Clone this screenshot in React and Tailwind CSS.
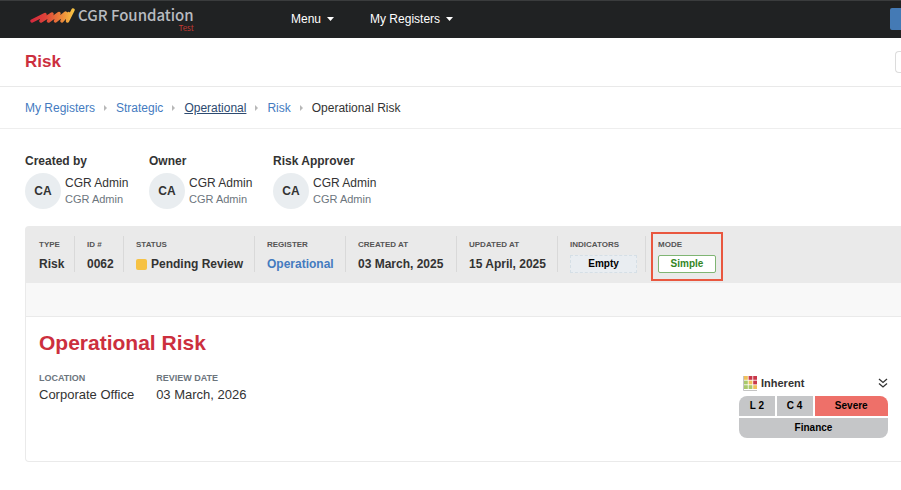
import React from "react";

const people = [
    { role: 'Created by', name: 'CGR Admin', org: 'CGR Admin', initials: 'CA' },
    { role: 'Owner', name: 'CGR Admin', org: 'CGR Admin', initials: 'CA' },
    { role: 'Risk Approver', name: 'CGR Admin', org: 'CGR Admin', initials: 'CA' },
];

const crumbs = ['My Registers', 'Strategic', 'Operational', 'Risk'];

const matrixColors = [
    '#f0c05a', '#c9384a', '#c9384a',
    '#a9c86a', '#f0c05a', '#c9384a',
    '#a9c86a', '#a9c86a', '#f0c05a',
];

const Logo = () => (
    <svg width="46" height="16" viewBox="0 0 46 16" fill="none" strokeLinecap="round" strokeLinejoin="round" strokeWidth="3.400" aria-hidden="true">
        <defs>
            <linearGradient id="logo" x1="0" y1="0" x2="46" y2="0" gradientUnits="userSpaceOnUse">
                <stop offset="0" stopColor="#d2263e" />
                <stop offset="0.35" stopColor="#de4438" />
                <stop offset="0.7" stopColor="#ec8a3a" />
                <stop offset="1" stopColor="#f9d045" />
            </linearGradient>
        </defs>
        <path d="M2 14L15 7.500L11 14L22 7L18.500 14L29 6.500L25.500 14L35.500 6L32 14L38.500 6.500L37.500 14L43 3" stroke="url(#logo)" />
    </svg>
);

const NavMenu = ({ label }) => (
    <button className="flex items-center gap-1.5 text-white">
        {label}
        <svg width="7" height="4" viewBox="0 0 7 4" aria-hidden="true">
            <path d="M0 0h7L3.500 4z" fill="currentColor" />
        </svg>
    </button>
);

const Person = ({ role, name, org, initials }) => (
    <div className="min-w-[106px]">
        <h2 className="leading-4 font-bold text-[#333]">{role}</h2>
        <div className="mt-1 flex items-center gap-1">
            <div className="flex h-9 w-9 items-center justify-center rounded-full bg-[#e9edf0] font-bold text-[#333]">
                {initials}
            </div>
            <div>
                <div className="leading-4 text-[#333]">{name}</div>
                <div className="text-[11px] leading-4 text-[#6c757d]">{org}</div>
            </div>
        </div>
    </div>
);

const Field = ({ label, children, className = '' }) => (
    <div className={`h-9 ${className}`}>
        <div className="text-[8px] leading-[18px] font-bold text-[#555] uppercase">{label}</div>
        <div className="mt-0.5 flex h-4 items-center gap-1 font-bold whitespace-nowrap text-[#333]">{children}</div>
    </div>
);

const App = () => {
    return (
        <div className="min-h-screen overflow-x-hidden bg-white font-['Liberation_Sans',Arial,sans-serif] text-xs">
            {/* Top bar */}
            <header className="flex h-[38px] items-center border-t border-[#3a3c3d] bg-[#202223] pl-[30px]">
                <a href="#" className="flex w-[261px] items-start gap-0.5">
                    <Logo />
                    <span className="flex flex-col items-end font-['Noto_Sans_CJK_JP',sans-serif]">
                        <span className="text-[15px] leading-4 font-medium text-[#b8bbc0]">CGR Foundation</span>
                        <span className="text-[8px] leading-[9px] text-[#c73a32]">Test</span>
                    </span>
                </a>
                <nav className="flex gap-9 pb-0.5">
                    <NavMenu label="Menu" />
                    <NavMenu label="My Registers" />
                </nav>
                <button aria-label="Create" className="mb-0.5 ml-auto h-[22px] w-[11px] rounded-l-xs bg-[#447ab5]"></button>
            </header>

            {/* Page title */}
            <div className="flex h-[49px] items-center border-b border-[#e9e9e9] pl-[25px]">
                <h1 className="text-[17px] font-bold text-[#cc2f3e]">Risk</h1>
                <button aria-label="Actions" className="ml-auto h-[22px] w-[6px] rounded-l-sm border border-r-0 border-[#dcdcdc] bg-white"></button>
            </div>

            {/* Breadcrumbs */}
            <nav aria-label="Breadcrumb" className="flex h-[42px] items-center gap-[9px] border-b border-[#eee] pl-[25px]">
                {crumbs.map((crumb) => (
                    <React.Fragment key={crumb}>
                        <a href="#" className={crumb === 'Operational' ? 'text-[#2d4a70] underline' : 'text-[#447bbf]'}>{crumb}</a>
                        <svg width="3" height="6" viewBox="0 0 3 6" aria-hidden="true">
                            <path d="M0 0l3 3-3 3z" fill="#b8b8b8" />
                        </svg>
                    </React.Fragment>
                ))}
                <span className="text-[#333]">Operational Risk</span>
            </nav>

            <main className="pl-[25px]">
                <div className="flex gap-[18px] pt-6">
                    {people.map((person) => <Person key={person.role} {...person} />)}
                </div>

                <div className="mt-[17px] rounded-l-sm border border-r-0 border-[#eaeaea]">
                    {/* Register summary */}
                    <div className="flex h-14 bg-[#eaeaea] pt-[9px] pl-[13px]">
                        <Field label="Type" className="mr-3 min-w-[36px] border-r border-[#d9d9d9]">Risk</Field>
                        <Field label="ID #" className="mr-3 min-w-[37px] border-r border-[#d9d9d9]">0062</Field>
                        <Field label="Status" className="mr-3 min-w-[119px] border-r border-[#d9d9d9]">
                            <span className="h-[11px] w-[11px] rounded-xs bg-[#f6c244]"></span>
                            Pending Review
                        </Field>
                        <Field label="Register" className="mr-3 min-w-[79px] border-r border-[#d9d9d9]">
                            <a href="#" className="text-[#447bbf]">Operational</a>
                        </Field>
                        <Field label="Created at" className="mr-3 min-w-[99px] border-r border-[#d9d9d9]">03 March, 2025</Field>
                        <Field label="Updated at" className="mr-3 min-w-[89px] border-r border-[#d9d9d9]">15 April, 2025</Field>
                        <Field label="Indicators" className="mr-3 min-w-[76px] border-r border-[#d9d9d9]">
                            <button className="h-[18px] w-[67px] border border-dashed border-[#d5dfe6] bg-[#e9edf1] text-[10px] font-bold text-black">Empty</button>
                        </Field>
                        <div className="-mt-1 -ml-[7px] h-[49px] border-2 border-[#e9573f] px-[5px] pt-0.5">
                            <Field label="Mode">
                                <button className="h-[18px] w-[58px] rounded-xs border border-[#7fb573] bg-white text-[10px] font-bold text-[#33861f]">Simple</button>
                            </Field>
                        </div>
                    </div>
                    <div className="h-[34px] border-b border-[#eaeaea] bg-[#f8f8f8]"></div>

                    {/* Risk details */}
                    <div className="flex h-36 justify-between px-[13px]">
                        <div>
                            <h2 className="pt-3 text-[21px] leading-7 font-bold text-[#cc2f3e]">Operational Risk</h2>
                            <dl className="mt-[13px] flex gap-[22px]">
                                <div>
                                    <dt className="text-[9px] leading-4 font-bold text-[#6c757d]">LOCATION</dt>
                                    <dd className="text-[13px] leading-[18px] text-[#333]">Corporate Office</dd>
                                </div>
                                <div>
                                    <dt className="text-[9px] leading-4 font-bold text-[#6c757d]">REVIEW DATE</dt>
                                    <dd className="text-[13px] leading-[18px] text-[#333]">03 March, 2026</dd>
                                </div>
                            </dl>
                        </div>
                        <section className="mt-[58px] w-[149px]">
                            <div className="flex h-4 items-center gap-1 pl-1">
                                <svg width="14" height="15" viewBox="0 0 14 15" aria-hidden="true">
                                    <path d="M0.500 0V14.500H14" stroke="#c4c4c4" fill="none" />
                                    {matrixColors.map((color, i) => (
                                        <rect key={i} x={1 + (i % 3) * 4.600} y={Math.floor(i / 3) * 4.600} width="3.800" height="3.800" fill={color} />
                                    ))}
                                </svg>
                                <h3 className="text-[11px] font-bold text-[#333]">Inherent</h3>
                                <button aria-label="Expand" className="ml-auto">
                                    <svg width="10" height="12" viewBox="0 0 10 12" fill="none" stroke="#333" strokeWidth="1.300" aria-hidden="true">
                                        <path d="M1 2l4 3.500L9 2M1 6.500l4 3.500 4-3.500" />
                                    </svg>
                                </button>
                            </div>
                            <div className="mt-[5px] grid grid-cols-4 gap-0.5 overflow-hidden rounded-lg text-center text-[10px] leading-5 font-bold text-black">
                                <span className="bg-[#c5c6c8]">L 2</span>
                                <span className="bg-[#c5c6c8]">C 4</span>
                                <span className="col-span-2 bg-[#ee7069]">Severe</span>
                                <span className="col-span-4 bg-[#c5c6c8]">Finance</span>
                            </div>
                        </section>
                    </div>
                </div>
            </main>
        </div>
    );
};

export default App;
